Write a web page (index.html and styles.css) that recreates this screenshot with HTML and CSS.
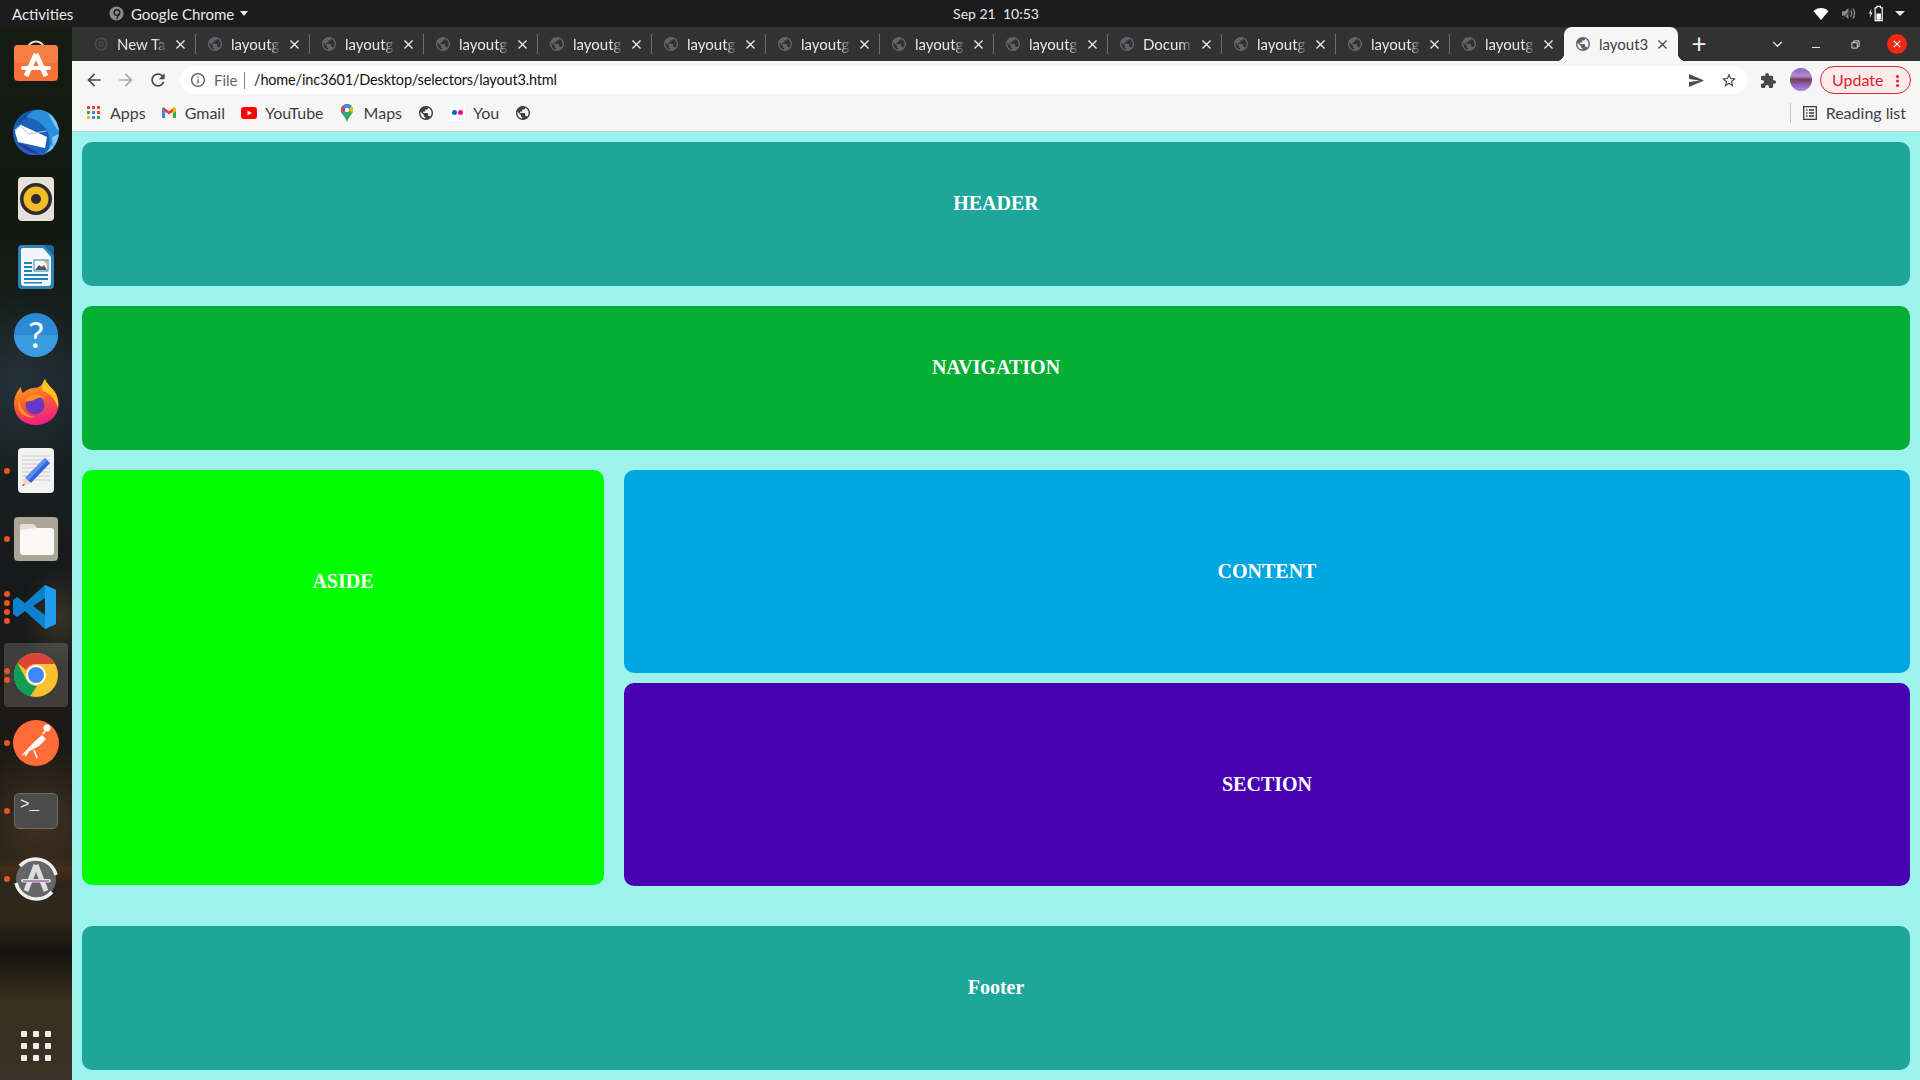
FILE: index.html
```html
<!DOCTYPE html>
<html lang="en">

<head>
    <meta charset="UTF-8">
    <title>layout3</title>
    <link rel="stylesheet" href="styles.css">
</head>

<body>
    <svg class="sprite" aria-hidden="true">
        <symbol id="globe" viewBox="2 2 20 20"><path d="M12 2C6.48 2 2 6.48 2 12s4.48 10 10 10 10-4.48 10-10S17.52 2 12 2zm-1 17.93c-3.95-.49-7-3.85-7-7.93 0-.62.08-1.21.21-1.79L9 15v1c0 1.1.9 2 2 2v1.93zm6.9-2.54c-.26-.81-1-1.39-1.9-1.39h-1v-3c0-.55-.45-1-1-1H8v-2h2c.55 0 1-.45 1-1V7h2c1.1 0 2-.9 2-2v-.41c2.93 1.19 5 4.06 5 7.41 0 2.08-.8 3.97-2.1 5.39z"/></symbol>
        <symbol id="close" viewBox="5 5 14 14"><path d="M19 6.41L17.59 5 12 10.59 6.41 5 5 6.41 10.59 12 5 17.59 6.41 19 12 13.41 17.59 19 19 17.59 13.41 12z"/></symbol>
        <symbol id="i_back" viewBox="0 0 24 24"><path d="M20 11H7.830l5.590-5.590L12 4l-8 8 8 8 1.410-1.410L7.830 13H20v-2z"/></symbol>
        <symbol id="i_fwd" viewBox="0 0 24 24"><path d="M12 4l-1.410 1.410L16.170 11H4v2h12.170l-5.580 5.590L12 20l8-8z"/></symbol>
        <symbol id="i_reload" viewBox="0 0 24 24"><path d="M17.650 6.350C16.200 4.900 14.210 4 12 4c-4.420 0-7.990 3.580-7.990 8s3.570 8 7.990 8c3.730 0 6.840-2.550 7.730-6h-2.080c-.82 2.330-3.040 4-5.650 4-3.310 0-6-2.690-6-6s2.690-6 6-6c1.660 0 3.140.69 4.220 1.780L13 11h7V4l-2.350 2.350z"/></symbol>
    </svg>

    <div class="topbar">
        <span class="activities">Activities</span>
        <span class="app_name">
            <svg class="app_icon" viewBox="0 0 16 16"><circle cx="8" cy="8" r="7.500" fill="#8a8a8a"/><circle cx="8.500" cy="7" r="3" fill="none" stroke="#222" stroke-width="1.600"/><path d="M11 8l-3 6" stroke="#222" stroke-width="1.400"/></svg>
            Google Chrome
            <i class="caret"></i>
        </span>
        <span class="clock">Sep 21&nbsp; 10:53</span>
        <span class="tray">
            <svg class="tray_wifi" viewBox="0 0 16 14"><path d="M0 4.500C2 2 5 1 8 1s6 1 8 3.500L8 14z" fill="#fff"/></svg>
            <svg class="tray_sound" viewBox="0 0 16 16"><path d="M1 5.500h3L8 2v12l-4-3.500H1z" fill="#8b8b8b"/><path d="M10 4.500c1.600 2 1.600 5 0 7M12.500 2.500c2.600 3 2.600 8 0 11" fill="none" stroke="#8b8b8b" stroke-width="1.400"/><path d="M1 14L13 2" stroke="#3a3a3a" stroke-width="1.200"/></svg>
            <svg class="tray_power" viewBox="0 0 18 18"><path d="M4 3L1 9h2l-1 5 3-6H3z" fill="#fff"/><path d="M10 1h4v1.500h2V17H8V2.500h2z" fill="none" stroke="#fff" stroke-width="1.300"/><rect x="9.500" y="9" width="5" height="7" fill="#fff"/></svg>
            <i class="caret caret_big"></i>
        </span>
    </div>

    <div class="desktop">
        <nav class="dock">
            <div class="dock_item">
                <svg viewBox="0 0 48 48"><path d="M16 10c0-10 16-10 16 0" fill="none" stroke="#f0d9b8" stroke-width="2"/><rect x="2" y="6" width="44" height="36" rx="4" fill="#f4713a"/><rect x="2" y="6" width="44" height="18" rx="4" fill="#f77f45"/><path d="M24 15L14 37M24 15l10 22" stroke="#fff" stroke-width="5" fill="none"/><rect x="9" y="27" width="30" height="4" rx="2" fill="#fff"/></svg>
            </div>
            <div class="dock_item">
                <svg viewBox="0 0 48 48"><circle cx="24" cy="26" r="23" fill="#1c62b8"/><path d="M10 10C16 3 26 1 33 4c8 3 13 10 14 20 0 8-4 16-11 20 3-8 2-16-2-22C28 14 20 10 10 10z" fill="#2b8fdc"/><path d="M36 6c6 4 10 10 11 18-3-2-6-8-11-18zM40 30l7-3c-1 5-3 10-6 13zM33 46c3-2 5-5 6-8l3 2c-2 3-5 5-9 6z" fill="#7cc6f4"/><path d="M4 20C6 11 14 3 24 3c-6 2-9 5-10 9l-8 5z" fill="#1650a8"/><path d="M2 24C5 20 8 18 10 17l-3 7z" fill="#9ed0f2"/><path d="M3 25l6-7 26 12-2 11-27-6z" fill="#fff"/><path d="M8.500 19l8 8 18-3" fill="none" stroke="#b9c3d6"/><path d="M6 36c6 7 14 10 22 11-6-3-11-6-15-9z" fill="#3a2a9c"/></svg>
            </div>
            <div class="dock_item">
                <svg viewBox="0 0 48 48"><rect x="6" y="2" width="36" height="44" rx="4" fill="#e6e1d8"/><circle cx="24" cy="24" r="16" fill="#2e2c2b"/><circle cx="24" cy="24" r="12.500" fill="#f0bc28"/><circle cx="24" cy="24" r="5" fill="#2e2c2b"/></svg>
            </div>
            <div class="dock_item">
                <svg viewBox="0 0 48 48"><path d="M10 2h22l10 10v30a4 4 0 0 1-4 4H10a4 4 0 0 1-4-4V6a4 4 0 0 1 4-4z" fill="#2a86b8"/><path d="M10 5h21l8 9v26a3 3 0 0 1-3 3H12a3 3 0 0 1-3-3V6z" fill="#f4f5f6"/><path d="M32 2h6a4 4 0 0 1 4 4v7z" fill="#1b6a96"/><g fill="#1f83bd"><rect x="12" y="19" width="8" height="2"/><rect x="12" y="23" width="8" height="2"/><rect x="12" y="27" width="8" height="2"/><rect x="12" y="31" width="24" height="2"/><rect x="12" y="35" width="24" height="2"/><rect x="12" y="39" width="18" height="1.500"/></g><rect x="22" y="17" width="14" height="11" fill="#fff" stroke="#1f83bd"/><path d="M23 27l4-5 3 2 2-2 3 5z" fill="#555"/><path d="M31 18h4v3z" fill="#f0b429"/></svg>
            </div>
            <div class="dock_item">
                <svg viewBox="0 0 48 48"><circle cx="24" cy="24" r="22" fill="#2a8ad6"/><path d="M2 24a22 22 0 0 0 44 0z" fill="#3a9be0"/><text class="help_mark" x="24" y="37" text-anchor="middle">?</text></svg>
            </div>
            <div class="dock_item">
                <svg viewBox="0 0 48 48"><defs><linearGradient id="fox" x1="0.2" y1="0" x2="0.5" y2="1"><stop offset="0" stop-color="#ffb21f"/><stop offset="0.5" stop-color="#ff5f2a"/><stop offset="1" stop-color="#ef1c8a"/></linearGradient></defs><path d="M33 0c1 5 8 9 11 15 4 8 3 18-3 24-5 5-11 7-17 7C12 46 2 38 2 25 2 18 5 12 9 8c0 3 1 5 2 6 3-3 7-5 11-5 5 0 9-3 11-9z" fill="url(#fox)"/><path d="M33 0c1 5 8 9 11 15 2 5 3 10 2 14-3-10-9-15-15-17-2-4-1-8 2-12z" fill="#ffc21f"/><circle cx="23" cy="26" r="9.500" fill="#6a39c2"/><path d="M13 22c3-7 13-9 20-3-5-1-8 0-11 2-3 1-6 2-9 1z" fill="#ff8f1f"/><path d="M7 18c0 9 5 19 16 20-7 2-17-3-17-13z" fill="#ff9a1f"/></svg>
            </div>
            <div class="dock_item">
                <span class="run_dots"><i></i></span>
                <svg viewBox="0 0 48 48"><rect x="6" y="1" width="36" height="45" rx="4" fill="#f2f2f2"/><g stroke="#c8c8cc"><path d="M10 9h28M10 13h28M10 17h28M10 21h28M10 25h28M10 29h28M10 33h28"/></g><path d="M33 11l5 5-19 20-6-5z" fill="#2f66dc"/><path d="M33 11l2.500 2.500-19 20-3-2.500z" fill="#5f8af0"/><path d="M13 31l6 5-9 3z" fill="#f6d6b0"/><path d="M11.500 37l-1.500 2 3-.9z" fill="#444"/></svg>
            </div>
            <div class="dock_item">
                <span class="run_dots"><i></i></span>
                <svg viewBox="0 0 48 48"><rect x="2" y="2" width="44" height="44" rx="4" fill="#aba697"/><path d="M8 12a3 3 0 0 1 3-3h10l4 4h14a3 3 0 0 1 3 3v21a3 3 0 0 1-3 3H11a3 3 0 0 1-3-3z" fill="#faf8f5"/><path d="M8 15v-3a3 3 0 0 1 3-3h10l4 4-17 2z" fill="#e3dfd6"/></svg>
            </div>
            <div class="dock_item">
                <span class="run_dots"><i></i><i></i><i></i><i></i></span>
                <svg viewBox="0 0 48 48"><path d="M33 2l11 5v34l-11 5-20-18-8 6-4-3v-14l4-3 8 6zm0 13L21 23l12 9z" fill="#0f80cc"/><path d="M33 2l11 5v34l-11 5z" fill="#1f9cf0"/></svg>
            </div>
            <div class="dock_item dock_active">
                <span class="run_dots"><i></i><i></i></span>
                <svg viewBox="0 0 48 48"><circle cx="24" cy="24" r="22" fill="#fbc02d"/><path d="M24 2a22 22 0 0 1 19 11H24a11 11 0 0 0-10 6L5.500 12A22 22 0 0 1 24 2z" fill="#db4437"/><path d="M5.500 12L14 28a11 11 0 0 0 11 7l-7 10.500A22 22 0 0 1 5.500 12z" fill="#0f9d58"/><circle cx="24" cy="24" r="10" fill="#fff"/><circle cx="24" cy="24" r="8" fill="#4285f4"/></svg>
            </div>
            <div class="dock_item">
                <span class="run_dots"><i></i></span>
                <svg viewBox="0 0 48 48"><circle cx="24" cy="24" r="23" fill="#ff6c37"/><path d="M9 37l13-14 8-7 4 4-7 7-11 6-5 3z" fill="#fff"/><path d="M22 31l3 8M16 33l-3 4M31 15l2-3" stroke="#fff" stroke-width="1.500"/><circle cx="35" cy="9" r="3.500" fill="#fff"/></svg>
            </div>
            <div class="dock_item">
                <span class="run_dots"><i></i></span>
                <div class="terminal">&gt;_</div>
            </div>
            <div class="dock_item">
                <span class="run_dots"><i></i></span>
                <svg viewBox="0 0 48 48"><circle cx="24" cy="24" r="20" fill="#666"/><path d="M8 11A21 21 0 0 1 44 20M40 37A21 21 0 0 1 4 28" fill="none" stroke="#eee" stroke-width="3.500"/><path d="M24 10L14 36M24 10l10 26" stroke="#ddd" stroke-width="5" fill="none"/><rect x="9" y="24" width="30" height="3.500" rx="1.700" fill="#ddd"/><path d="M11 26h26" stroke="#7a3d9c"/></svg>
            </div>
            <div class="dock_item dock_grid">
                <div class="app_grid"><i></i><i></i><i></i><i></i><i></i><i></i><i></i><i></i><i></i></div>
            </div>
        </nav>

        <div class="browser">
            <div class="tabstrip">
                <div class="tab">
                    <svg class="favicon favicon_dim" viewBox="0 0 16 16"><circle cx="8" cy="8" r="6.500" fill="none" stroke="#4a4a4a" stroke-width="2"/><circle cx="8" cy="8" r="2.500" fill="none" stroke="#4a4a4a" stroke-width="1.500"/></svg>
                    <span class="tab_title">New Ta</span>
                    <svg class="tab_close"><use href="#close"/></svg>
                </div>
                <div class="tab"><svg class="favicon"><use href="#globe"/></svg><span class="tab_title">layoutg</span><svg class="tab_close"><use href="#close"/></svg></div>
                <div class="tab"><svg class="favicon"><use href="#globe"/></svg><span class="tab_title">layoutg</span><svg class="tab_close"><use href="#close"/></svg></div>
                <div class="tab"><svg class="favicon"><use href="#globe"/></svg><span class="tab_title">layoutg</span><svg class="tab_close"><use href="#close"/></svg></div>
                <div class="tab"><svg class="favicon"><use href="#globe"/></svg><span class="tab_title">layoutg</span><svg class="tab_close"><use href="#close"/></svg></div>
                <div class="tab"><svg class="favicon"><use href="#globe"/></svg><span class="tab_title">layoutg</span><svg class="tab_close"><use href="#close"/></svg></div>
                <div class="tab"><svg class="favicon"><use href="#globe"/></svg><span class="tab_title">layoutg</span><svg class="tab_close"><use href="#close"/></svg></div>
                <div class="tab"><svg class="favicon"><use href="#globe"/></svg><span class="tab_title">layoutg</span><svg class="tab_close"><use href="#close"/></svg></div>
                <div class="tab"><svg class="favicon"><use href="#globe"/></svg><span class="tab_title">layoutg</span><svg class="tab_close"><use href="#close"/></svg></div>
                <div class="tab"><svg class="favicon"><use href="#globe"/></svg><span class="tab_title">Docum</span><svg class="tab_close"><use href="#close"/></svg></div>
                <div class="tab"><svg class="favicon"><use href="#globe"/></svg><span class="tab_title">layoutg</span><svg class="tab_close"><use href="#close"/></svg></div>
                <div class="tab"><svg class="favicon"><use href="#globe"/></svg><span class="tab_title">layoutg</span><svg class="tab_close"><use href="#close"/></svg></div>
                <div class="tab tab_last"><svg class="favicon"><use href="#globe"/></svg><span class="tab_title">layoutg</span><svg class="tab_close"><use href="#close"/></svg></div>
                <div class="tab tab_active"><svg class="favicon"><use href="#globe"/></svg><span class="tab_title">layout3</span><svg class="tab_close"><use href="#close"/></svg></div>
                <span class="new_tab">+</span>
                <div class="win_btns">
                    <svg class="win_chevron" viewBox="0 0 12 8"><path d="M1 1l5 5 5-5" fill="none" stroke="#e8e8e8" stroke-width="1.500"/></svg>
                    <i class="win_min"></i>
                    <svg class="win_restore" viewBox="0 0 10 10"><path d="M1 3h6v6H1zM3 3V1h6v6H7" fill="none" stroke="#e8e8e8"/></svg>
                    <span class="win_close"><svg viewBox="0 0 10 10"><path d="M1 1l8 8M9 1l-8 8" stroke="#fff" stroke-width="1.500"/></svg></span>
                </div>
            </div>

            <div class="toolbar">
                <svg class="tool_icon"><use href="#i_back"/></svg>
                <svg class="tool_icon tool_off"><use href="#i_fwd"/></svg>
                <svg class="tool_icon"><use href="#i_reload"/></svg>
                <div class="omnibox">
                    <svg class="info_icon" viewBox="2 2 20 20"><path d="M11 7h2v2h-2zm0 4h2v6h-2zm1-9C6.480 2 2 6.480 2 12s4.480 10 10 10 10-4.480 10-10S17.520 2 12 2zm0 18c-4.410 0-8-3.590-8-8s3.590-8 8-8 8 3.590 8 8-3.590 8-8 8z"/></svg>
                    <span class="scheme">File</span>
                    <span class="url">/home/inc3601/Desktop/selectors/layout3.html</span>
                    <svg class="omni_send" viewBox="2 3 21 18"><path d="M2.010 21L23 12 2.010 3 2 10l15 2-15 2z"/></svg>
                    <svg class="omni_star" viewBox="2 2 20 19"><path d="M22 9.240l-7.190-.620L12 2 9.190 8.630 2 9.240l5.460 4.730L5.820 21 12 17.270 18.180 21l-1.630-7.030L22 9.240zM12 15.400l-3.760 2.270 1-4.280-3.320-2.880 4.380-.380L12 6.100l1.710 4.040 4.380.380-3.320 2.880 1 4.280L12 15.400z"/></svg>
                </div>
                <svg class="ext_icon" viewBox="2 1 21 21"><path d="M20.500 11H19V7c0-1.100-.9-2-2-2h-4V3.500C13 2.120 11.880 1 10.500 1S8 2.120 8 3.500V5H4c-1.100 0-1.990.9-1.990 2v3.800H3.500c1.490 0 2.700 1.210 2.700 2.700s-1.210 2.700-2.700 2.700H2V20c0 1.100.9 2 2 2h3.800v-1.500c0-1.490 1.210-2.700 2.700-2.700 1.490 0 2.700 1.210 2.700 2.700V22H17c1.100 0 2-.9 2-2v-4h1.500c1.380 0 2.500-1.120 2.500-2.500S21.880 11 20.500 11z"/></svg>
                <span class="avatar"></span>
                <span class="update_btn">Update<i class="update_dots"></i></span>
            </div>

            <div class="bookmarks">
                <span class="bm bm_tight">
                    <span class="apps_grid"><i class="c_r"></i><i class="c_r"></i><i class="c_r"></i><i class="c_g"></i><i class="c_b"></i><i class="c_r"></i><i class="c_y"></i><i class="c_b"></i><i class="c_g"></i></span>
                    Apps
                </span>
                <span class="bm bm_tight">
                    <svg class="bm_icon" viewBox="0 0 16 12"><path d="M0 1.500V12h3.500V5L8 8.300 12.500 5v7H16V1.500L14 0 8 4.500 2 0z" fill="#ea4335"/><path d="M0 1.500V12h3.500V4.200z" fill="#4285f4"/><path d="M16 1.500V12h-3.500V4.200z" fill="#34a853"/><path d="M14 0l2 1.500v3l-3.500 2.300V2z" fill="#fbbc04"/></svg>
                    Gmail
                </span>
                <span class="bm">
                    <svg class="bm_yt" viewBox="0 0 16 12"><rect width="16" height="12" rx="3" fill="#f00"/><path d="M6.500 3.500v5L11 6z" fill="#fff"/></svg>
                    YouTube
                </span>
                <span class="bm">
                    <svg class="bm_maps" viewBox="0 0 12 18"><path d="M6 0a6 6 0 0 1 6 6c0 4-4 6-6 12-2-6-6-8-6-12a6 6 0 0 1 6-6z" fill="#34a853"/><path d="M6 0a6 6 0 0 1 4.500 2L2 11C1 9 0 8 0 6a6 6 0 0 1 6-6z" fill="#4285f4"/><path d="M10.500 2A6 6 0 0 1 12 6c0 1-.3 2-.8 3L8 6z" fill="#fbbc04"/><path d="M0 6a6 6 0 0 1 1.700-4.200L4 4.500 1.500 9.500C.5 8.500 0 7.500 0 6z" fill="#ea4335"/><circle cx="6" cy="6" r="2.200" fill="#fff"/></svg>
                    Maps
                </span>
                <svg class="bm_globe"><use href="#globe"/></svg>
                <span class="bm">
                    <span class="flickr"><i></i><i></i></span>
                    You
                </span>
                <svg class="bm_globe"><use href="#globe"/></svg>
                <span class="reading">
                    <svg class="reading_icon" viewBox="0 0 14 14"><path d="M.7.700h12.600v12.600H.7zM3 4h1.500M6 4h5M3 7h1.500M6 7h5M3 10h1.500M6 10h5" fill="none" stroke="#3c3c3c" stroke-width="1.300"/></svg>
                    Reading list
                </span>
            </div>

            <main class="page">
                <div class="box box_header">HEADER</div>
                <div class="box box_nav">NAVIGATION</div>
                <div class="middle">
                    <div class="box box_aside">ASIDE</div>
                    <div class="stack">
                        <div class="box box_content">CONTENT</div>
                        <div class="box box_section">SECTION</div>
                    </div>
                </div>
                <div class="box box_footer">Footer</div>
            </main>
        </div>
    </div>
</body>

</html>
```

FILE: styles.css
```css
* {
    box-sizing: border-box;
}

html,
body {
    margin: 0;
    height: 1080px;
    overflow: hidden;
}

body {
    display: flex;
    flex-direction: column;
    font-family: "Lato", "Noto Sans", sans-serif;
    font-size: 15px;
    background-color: #1b1b1b;
}

.sprite {
    display: none;
}

i {
    display: block;
}

/* gnome top bar */
.topbar {
    position: relative;
    height: 27px;
    flex: none;
    display: flex;
    align-items: center;
    padding-left: 12px;
    background-color: #1c1c1c;
    color: #e9e9e9;
}

.activities {
    width: 97px;
}

.app_name {
    display: flex;
    align-items: center;
    gap: 7px;
}

.app_icon {
    width: 15px;
    height: 15px;
}

.caret {
    width: 0;
    height: 0;
    margin-left: -1px;
    border-left: 4px solid transparent;
    border-right: 4px solid transparent;
    border-top: 5px solid #e9e9e9;
}

.clock {
    position: absolute;
    left: 72px;
    right: 0;
    text-align: center;
    font-size: 14px;
    pointer-events: none;
}

.tray {
    margin-left: auto;
    display: flex;
    align-items: center;
    padding-right: 15px;
}

.tray_wifi {
    width: 16px;
    height: 13px;
    margin-right: 12px;
}

.tray_sound {
    width: 15px;
    height: 15px;
    margin-right: 12px;
}

.tray_power {
    width: 16px;
    height: 17px;
    margin-right: 11px;
}

.caret_big {
    margin-left: 0;
    border-left-width: 5px;
    border-right-width: 5px;
}

.desktop {
    flex: 1;
    display: flex;
    min-height: 0;
}

/* launcher on the left */
.dock {
    width: 72px;
    flex: none;
    display: flex;
    flex-direction: column;
    padding-top: 2px;
    background:
        linear-gradient(180deg, transparent 830px, rgba(120, 60, 20, 0.3) 842px, transparent 856px),
        radial-gradient(ellipse 70px 70px at 40px 790px, rgba(90, 70, 45, 0.5), transparent),
        radial-gradient(ellipse 40px 50px at 60px 590px, rgba(85, 75, 50, 0.5), transparent),
        radial-gradient(ellipse 70px 90px at 20px 360px, rgba(40, 60, 70, 0.6), transparent),
        linear-gradient(180deg, #141c14 0, #10180f 200px, #1b2426 350px, #16191a 560px, #1f1a14 760px, #30291c 890px, #15130f 925px, #38301f 975px, #3a3226 100%);
}

.dock_item {
    position: relative;
    height: 68px;
    flex: none;
    display: flex;
    align-items: center;
    justify-content: center;
}

.dock_item svg {
    width: 48px;
    height: 48px;
}

.dock_active::before {
    content: "";
    position: absolute;
    left: 4px;
    right: 4px;
    top: 2px;
    bottom: 2px;
    border-radius: 4px;
    background-color: rgba(255, 255, 255, 0.16);
}

.dock_active svg {
    position: relative;
}

.run_dots {
    position: absolute;
    left: 4px;
    top: 0;
    bottom: 0;
    z-index: 1;
    display: flex;
    flex-direction: column;
    justify-content: center;
    gap: 3px;
}

.run_dots i {
    width: 6px;
    height: 6px;
    border-radius: 50%;
    background-color: #e95420;
}

.help_mark {
    font-family: "Lato", sans-serif;
    font-size: 36px;
    fill: #fff;
}

.terminal {
    width: 44px;
    height: 36px;
    border-radius: 5px;
    border: 1px solid #6a6a6a;
    background-color: #4c4c4c;
    color: #f4f4f4;
    font-family: "Liberation Mono", monospace;
    font-size: 16px;
    line-height: 22px;
    padding-left: 5px;
}

.dock_grid {
    margin-top: auto;
}

.app_grid {
    display: grid;
    grid-template-columns: repeat(3, 6px);
    grid-auto-rows: 6px;
    gap: 6px;
}

.app_grid i {
    border-radius: 1px;
    background-color: #eeeeee;
}

/* chrome window */
.browser {
    flex: 1;
    min-width: 0;
    display: flex;
    flex-direction: column;
}

.tabstrip {
    position: relative;
    z-index: 0;
    height: 34px;
    flex: none;
    display: flex;
    align-items: flex-end;
    padding-left: 10px;
    background-color: #323232;
    color: #e8e8e8;
}

.tab {
    position: relative;
    width: 114px;
    height: 34px;
    flex: none;
    display: flex;
    align-items: center;
    padding: 0 11px 0 12px;
}

.tab::after {
    content: "";
    position: absolute;
    right: 0;
    top: 7px;
    height: 20px;
    border-right: 1px solid #6d6d6d;
}

.tab_last::after,
.tab_active::after {
    display: none;
}

.favicon {
    width: 14px;
    height: 14px;
    flex: none;
    fill: #60646a;
}

.favicon_dim {
    fill: none;
}

.tab_title {
    width: 50px;
    margin: 0 0 1px 9px;
    flex: none;
    white-space: nowrap;
    -webkit-mask-image: linear-gradient(90deg, #000 76%, transparent 100%);
    mask-image: linear-gradient(90deg, #000 76%, transparent 100%);
}

.tab_close {
    width: 9px;
    height: 9px;
    margin-left: auto;
    fill: #f0f0f0;
}

.tab_active {
    background-color: #f6f6f6;
    color: #3c4043;
    border-radius: 8px 8px 0 0;
}

.tab_active .tab_title {
    width: auto;
    -webkit-mask-image: none;
    mask-image: none;
}

.tab_active .favicon {
    fill: #5f6368;
}

.tab_active .tab_close {
    fill: #45484c;
}

.tab_active::before {
    content: "";
    position: absolute;
    left: -8px;
    right: -8px;
    bottom: 0;
    height: 8px;
    z-index: -1;
    background:
        radial-gradient(circle at 0 0, transparent 8px, #f6f6f6 8.5px) left / 8px 8px no-repeat,
        radial-gradient(circle at 100% 0, transparent 8px, #f6f6f6 8.5px) right / 8px 8px no-repeat;
}

.new_tab {
    width: 42px;
    height: 34px;
    text-align: center;
    font-size: 26px;
    line-height: 32px;
    color: #f0f0f0;
}

.win_btns {
    margin-left: auto;
    height: 34px;
    display: flex;
    align-items: center;
    padding-right: 13px;
}

.win_chevron {
    width: 11px;
    height: 7px;
    margin-right: 29px;
}

.win_min {
    width: 8px;
    height: 1px;
    margin: 6px 31px 0 0;
    background-color: #e8e8e8;
}

.win_restore {
    width: 9px;
    height: 9px;
    margin-right: 27px;
}

.win_close {
    width: 20px;
    height: 20px;
    border-radius: 50%;
    background-color: #ee2b12;
    display: flex;
    align-items: center;
    justify-content: center;
}

.win_close svg {
    width: 8px;
    height: 8px;
}

.toolbar {
    height: 33px;
    flex: none;
    display: flex;
    align-items: flex-end;
    padding-left: 12px;
    background-color: #f6f6f6;
}

.tool_icon {
    width: 20px;
    height: 20px;
    margin: 0 12px 4px 0;
    fill: #45484c;
}

.tool_off {
    fill: #a9abae;
}

.omnibox {
    width: 1567px;
    height: 28px;
    display: flex;
    align-items: center;
    padding: 0 11px;
    border-radius: 14px;
    background-color: #ffffff;
}

.info_icon {
    width: 14px;
    height: 14px;
    fill: #5f6368;
}

.scheme {
    width: 31px;
    margin-left: 9px;
    color: #5f6368;
    border-right: 1px solid #8a8a8a;
    line-height: 17px;
}

.url {
    margin: 0 0 1px 9px;
    color: #111;
    font-size: 14.5px;
    letter-spacing: -0.17px;
}

.omni_send {
    width: 15px;
    height: 13px;
    margin-left: auto;
    fill: #4c4f52;
}

.omni_star {
    width: 14px;
    height: 14px;
    margin-left: 18px;
    fill: #3f4245;
}

.ext_icon {
    width: 15px;
    height: 15px;
    margin: 0 0 6px 14px;
    fill: #45484c;
}

.avatar {
    width: 22px;
    height: 23px;
    margin: 0 0 3px 14px;
    border-radius: 50%;
    background: linear-gradient(180deg, #7e67c4 0, #b788d8 35%, #7a3a55 50%, #8a62b8 72%, #b08ce0 100%);
}

.update_btn {
    width: 91px;
    height: 28px;
    margin-left: 8px;
    padding: 0 0 1px 11px;
    position: relative;
    display: flex;
    align-items: center;
    font-size: 16px;
    border: 1px solid #d9232e;
    border-radius: 14px;
    background-color: #fdeaea;
    color: #d9232e;
}

.update_dots {
    position: absolute;
    right: 11px;
    top: 8px;
    width: 3px;
    height: 3px;
    border-radius: 50%;
    background-color: #d9232e;
    box-shadow: 0 4.5px 0 #d9232e, 0 9px 0 #d9232e;
}

/* bookmarks bar */
.bookmarks {
    height: 38px;
    flex: none;
    display: flex;
    align-items: center;
    padding-left: 15px;
    font-size: 16px;
    background-color: #f6f6f6;
    border-bottom: 1px solid #b9cfcd;
    color: #3c4043;
}

.bm {
    display: flex;
    align-items: center;
    margin-right: 17px;
}

.bm_tight {
    margin-right: 16px;
}

.apps_grid {
    display: grid;
    grid-template-columns: repeat(3, 3px);
    grid-auto-rows: 3px;
    gap: 2px;
    margin-right: 10px;
}

.c_r {
    background-color: #ea4335;
}

.c_g {
    background-color: #34a853;
}

.c_b {
    background-color: #4285f4;
}

.c_y {
    background-color: #fbbc04;
}

.bm_icon {
    width: 14px;
    height: 11px;
    margin-right: 9px;
}

.bm_yt {
    width: 16px;
    height: 12px;
    margin-right: 8px;
}

.bm_maps {
    width: 12px;
    height: 18px;
    margin-right: 11px;
}

.bm_globe {
    width: 14px;
    height: 14px;
    margin-right: 16px;
    fill: #3c4043;
}

.flickr {
    width: 16px;
    height: 16px;
    margin-right: 8px;
    display: flex;
    align-items: center;
    justify-content: center;
    gap: 1px;
    background-color: #fff;
}

.flickr i {
    width: 5px;
    height: 5px;
    border-radius: 50%;
    background-color: #ff0084;
}

.flickr i:first-child {
    background-color: #0063dc;
}

.reading {
    margin-left: auto;
    padding: 0 14px 0 12px;
    display: flex;
    align-items: center;
    gap: 9px;
    border-left: 1px solid #c4c4c4;
    line-height: 20px;
}

.reading_icon {
    width: 14px;
    height: 14px;
}

/* the page itself */
.page {
    flex: 1;
    padding: 10px;
    display: flex;
    flex-direction: column;
    background-color: #9cf3ec;
    color: #ffffff;
    font-family: "Liberation Serif", serif;
    font-size: 20px;
    font-weight: bold;
    text-align: center;
}

.box {
    border-radius: 10px;
}

.box_header,
.box_nav,
.box_footer {
    height: 144px;
    flex: none;
    padding-top: 50px;
}

.box_header {
    background-color: #1ea69b;
}

.box_nav {
    margin-top: 20px;
    background-color: #05ae34;
}

.middle {
    height: 416px;
    flex: none;
    margin-top: 20px;
    display: flex;
    gap: 20px;
}

.box_aside {
    width: 522px;
    height: 415px;
    flex: none;
    padding-top: 100px;
    background-color: #00ff00;
}

.stack {
    flex: 1;
    display: flex;
    flex-direction: column;
    gap: 10px;
}

.box_content,
.box_section {
    height: 203px;
    padding-top: 90px;
}

.box_content {
    background-color: #00a6e0;
}

.box_section {
    background-color: #4800b3;
}

.box_footer {
    margin-top: 40px;
    background-color: #1ea69b;
}
```
